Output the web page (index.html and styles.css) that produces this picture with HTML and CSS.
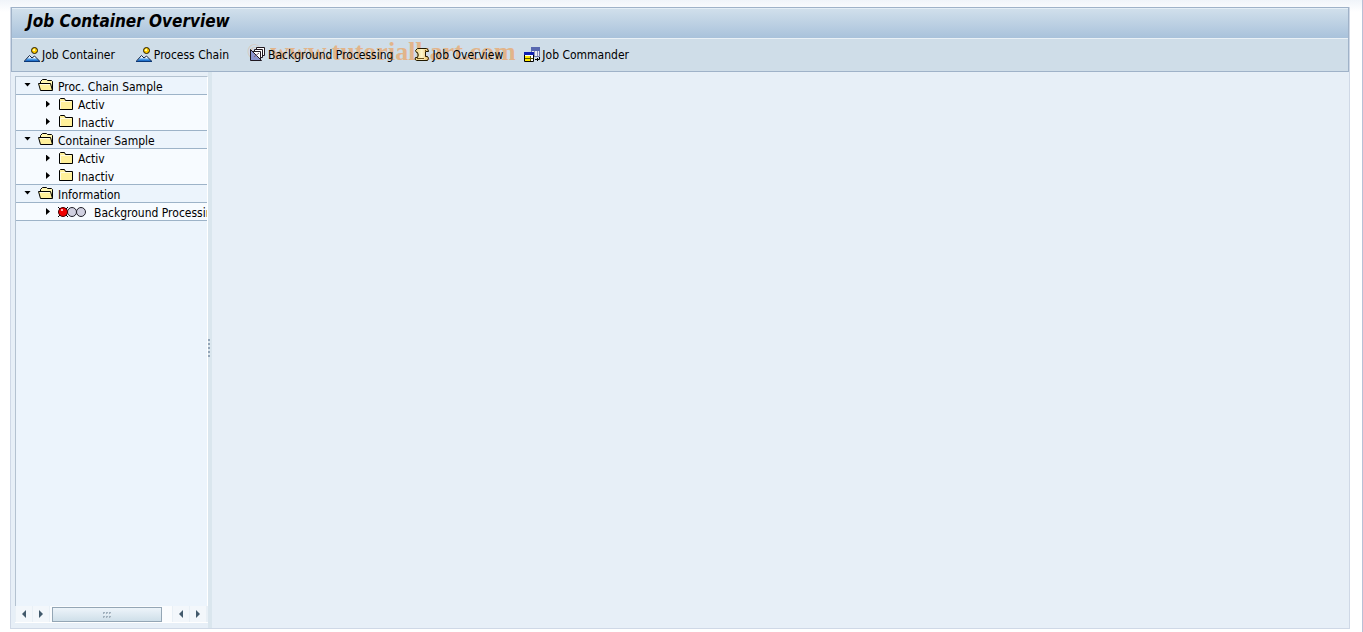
FILE: index.html
```html
<!DOCTYPE html>
<html lang="en">
<head>
<meta charset="utf-8">
<title>Job Container Overview</title>
<link rel="stylesheet" href="styles.css">
</head>
<body>
<svg class="defs" aria-hidden="true">
  <defs>
    <linearGradient id="peak" x1="0" y1="0" x2="0" y2="1"><stop offset="0.3" stop-color="#fff"/><stop offset="0.7" stop-color="#4a9ae8"/><stop offset="1" stop-color="#1060c0"/></linearGradient>
    <linearGradient id="scroll" x1="0" y1="0" x2="1" y2="0"><stop offset="0" stop-color="#e8c870"/><stop offset="0.5" stop-color="#fff8cc"/><stop offset="1" stop-color="#e8b860"/></linearGradient>
    <symbol id="open" viewBox="0 0 16 14">
      <path d="M2.500 5V3.500L4.500 1.500H8.500L9.500 2.500H13.500L14.500 3.500V12" fill="#fff6b0" stroke="#000"/>
      <path d="M.5 5.500H12.500L14.500 12.500H2.500Z" fill="#fff09a" stroke="#000"/>
      <path d="M2 6.500H12" stroke="#fffbe0"/>
    </symbol>
    <symbol id="closed" viewBox="0 0 16 14">
      <path d="M1.500 12.500V2.500L2.500 1.500H6.500L7.500 3.500H14.500V12.500Z" fill="#fff09a" stroke="#000"/>
      <path d="M2.500 12V4.500H13" stroke="#fffbe0" fill="none"/>
    </symbol>
    <symbol id="hill" viewBox="0 0 16 16">
      <path d="M6 14L10.500 9L15.500 14Z" fill="url(#peak)"/>
      <path d="M8 11L10.500 9L15.500 14" fill="none" stroke="#102040"/>
      <path d="M1 14L5.500 8.500L10.500 14Z" fill="url(#peak)"/>
      <path d="M.5 14L5.500 8.500L8 11" fill="none" stroke="#102040"/>
      <path d="M0 14.500H16" stroke="#0a3878"/>
      <circle cx="10.500" cy="3.500" r="3" fill="#ffcc00" stroke="#201800"/>
      <path d="M9 2h2v2H9z" fill="#fff6a0"/>
    </symbol>
  </defs>
</svg>
<div class="window">
  <header class="head">
    <h1 class="title">Job Container Overview</h1>
    <nav class="toolbar">
      <button class="tool"><svg class="icon"><use href="#hill"/></svg>Job Container</button>
      <button class="tool"><svg class="icon"><use href="#hill"/></svg>Process Chain</button>
      <button class="tool"><svg class="icon" viewBox="0 0 16 16">
        <path d="M6.500 .5H14.500V8.500H6.500Z" fill="#fff" stroke="#201820"/>
        <path d="M4.500 2.500H12.500V10.500H4.500Z" fill="#fff" stroke="#201820"/>
        <path d="M2.500 4.500H10.500V13.500H2.500Z" fill="#fff" stroke="#201820"/>
        <path d="M.5 2.500L11.500 13.500H.5Z" fill="#8c94cc" stroke="#201820"/>
        <path d="M4 10L9 6" stroke="#806070" fill="none"/>
      </svg>Background Processing</button>
      <button class="tool"><svg class="icon" viewBox="0 0 16 16">
        <path d="M3.500 1.500H12.500Q14.500 2 14.500 4.500H11.500V9.500H13.500Q15.500 11 13.500 13.500H2.500Q0 12.500 1.500 10.500H3.500Q5 8 3.500 5.500H2.500Q0 3.500 3.500 1.500Z" fill="url(#scroll)" stroke="#201800"/>
        <path d="M11.500 3V5M3 11.500H10" stroke="#705018" fill="none"/>
      </svg>Job Overview</button>
      <button class="tool"><svg class="icon" viewBox="0 0 16 16">
        <path d="M7.500 .5H15.500V9.500H7.500Z" fill="#e8e8f4" stroke="#7078a8"/>
        <path d="M7 0h9v4H7z" fill="#5868b0"/><path d="M10.500 4V9M13.500 4V9" stroke="#8890b8"/>
        <path d="M.5 5.500H9.500V14.500H.5Z" fill="#fff" stroke="#000"/>
        <path d="M0 5h10v3H0z" fill="#1020b0"/><path d="M1 9h6v5H1z" fill="#ffe800"/>
        <path d="M1 11.500H9M6.500 9V14" stroke="#605800"/>
        <path d="M15.500 10V12.500H11M13.500 11V14" stroke="#000" fill="none"/>
      </svg>Job Commander</button>
      <span class="mark"><span class="copy">©</span>www.tutorialkart.com</span>
    </nav>
  </header>
  <div class="body">
    <aside class="side">
      <div class="tree">
        <div class="row group"><i class="down"></i><svg class="folder"><use href="#open"/></svg>Proc. Chain Sample</div>
        <div class="row leaf"><i class="right"></i><svg class="folder"><use href="#closed"/></svg>Activ</div>
        <div class="row leaf last"><i class="right"></i><svg class="folder"><use href="#closed"/></svg>Inactiv</div>
        <div class="row group"><i class="down"></i><svg class="folder"><use href="#open"/></svg>Container Sample</div>
        <div class="row leaf"><i class="right"></i><svg class="folder"><use href="#closed"/></svg>Activ</div>
        <div class="row leaf last"><i class="right"></i><svg class="folder"><use href="#closed"/></svg>Inactiv</div>
        <div class="row group"><i class="down"></i><svg class="folder"><use href="#open"/></svg>Information</div>
        <div class="row leaf last"><i class="right"></i><svg class="lights" viewBox="0 0 30 12">
          <circle cx="14" cy="6" r="4.500" fill="#d0d0e0" stroke="#202028"/>
          <circle cx="23" cy="6" r="4.500" fill="#d0d0e0" stroke="#202028"/>
          <path d="M0 1L10 11M10 1L0 11" stroke="#000"/>
          <circle cx="5" cy="6" r="4.500" fill="#f00000" stroke="#400000"/>
          <path d="M3 3h2v2H3z" fill="#ffb0b0"/>
        </svg>Background Processing</div>
      </div>
      <div class="scrollbar">
        <button class="arrow" aria-label="Scroll left"><i class="tri back"></i></button>
        <button class="arrow" aria-label="Scroll right"><i class="tri"></i></button>
        <div class="track"><div class="thumb"><svg class="grip" viewBox="0 0 9 6"><path d="M0 1h2M3 1h2M6 1h2M0 5h2M3 5h2M6 5h2" stroke="#a0b0bd" stroke-width="2"/><path d="M1 2h1M4 2h1M7 2h1M1 6h1M4 6h1M7 6h1" stroke="#fff"/></svg></div></div>
        <button class="arrow" aria-label="Page left"><i class="tri back"></i></button>
        <button class="arrow" aria-label="Page right"><i class="tri"></i></button>
      </div>
    </aside>
    <div class="splitter"><i></i><i></i><i></i><i></i><i></i></div>
    <main class="content"></main>
  </div>
</div>
</body>
</html>
```
FILE: styles.css
```css
* { box-sizing: border-box; }
html, body { height: 100%; }
body {
  margin: 0;
  padding: 7px 12px 3px 10px;
  border-right: 1px solid #b8c0d6;
  background: linear-gradient(#f0f4f9, #fff 12px);
  font: 12px/16px "DejaVu Sans Condensed", "DejaVu Sans", sans-serif;
  color: #000;
}
.defs { position: absolute; width: 0; height: 0; }
.window {
  display: flex;
  flex-direction: column;
  height: 100%;
  border: 1px solid #cfd8e6;
  border-top: 0;
  background: #e7eff7;
}
.head { border: 1px solid #9fb2c8; }
.title {
  margin: 0;
  padding: 0 15px;
  height: 30px;
  border-top: 1px solid #e4eef6;
  background: linear-gradient(#d0dfeb, #a9c2db);
  font: italic bold 17px/24px "DejaVu Sans Condensed", "DejaVu Sans", sans-serif;
}
.toolbar {
  position: relative;
  isolation: isolate;
  display: flex;
  align-items: center;
  gap: 21px;
  height: 33px;
  padding: 0 12px;
  border-top: 1px solid #eaf1f6;
  background: #cfdde8;
}
.tool {
  display: flex;
  align-items: center;
  gap: 2px;
  padding: 0;
  border: 0;
  background: none;
  font: inherit;
  color: inherit;
  white-space: nowrap;
}
.icon { width: 16px; height: 16px; }
.mark {
  position: absolute;
  z-index: -1;
  left: 235px;
  top: 0;
  display: flex;
  gap: 8px;
  color: #f09a4c;
  opacity: 0.6;
  font: bold 26px/26px "Liberation Serif", serif;
  pointer-events: none;
}
.copy { font-weight: normal; font-size: 20px; opacity: 0.5; }
.body { flex: 1; display: flex; min-height: 0; }
.side {
  display: flex;
  flex-direction: column;
  width: 197px;
  padding: 4px 0 5px 4px;
}
.tree {
  flex: 1;
  overflow: hidden;
  border: 1px solid #b4c2d0;
  border-right-color: #fff;
  border-bottom: 0;
  background: #ecf4fc;
}
.row {
  display: flex;
  align-items: center;
  height: 18px;
  padding-top: 2px;
  white-space: nowrap;
  background: #f7fbff;
}
.group { background: #ecf4fc; }
.leaf { padding-left: 20px; }
.group, .last { border-bottom: 1px solid #9db3c8; }
.folder { flex: none; width: 16px; height: 14px; margin: 0 4px 3px 0; }
.lights { flex: none; width: 30px; height: 12px; margin: 0 6px 2px 0; }
.down { flex: none; width: 7px; height: 4px; margin: 0 7px 4px 8px; background: #000; clip-path: polygon(0 0, 100% 0, 50% 100%); }
.right { flex: none; width: 4px; height: 7px; margin: 0 8px 2px 10px; background: #000; clip-path: polygon(0 0, 100% 50%, 0 100%); }
.scrollbar { display: flex; gap: 1px; height: 17px; padding: 0 2px 0 1px; border-bottom: 1px solid #fff; background: #e9f0f6; }
.arrow { display: flex; align-items: center; justify-content: center; width: 16px; padding: 0; border: 0; background: #f3f7fb; }
.tri { width: 4px; height: 8px; background: #435a6c; clip-path: polygon(0 0, 100% 50%, 0 100%); }
.back { clip-path: polygon(100% 0, 100% 100%, 0 50%); }
.track { flex: 1; padding: 1px 10px 0 2px; background: #fafcfe; }
.thumb {
  display: flex;
  align-items: center;
  justify-content: center;
  height: 15px;
  border: 1px solid #94a6b5;
  background: linear-gradient(#edf4fa, #cfdfe9);
}
.grip { width: 9px; height: 6px; }
.splitter {
  display: flex;
  flex-direction: column;
  align-items: flex-start;
  justify-content: center;
  gap: 2px;
  width: 4px;
  padding-bottom: 4px;
  background: #dae6ee;
}
.splitter i { width: 2px; height: 2px; background: #93a5b8; }
.content { flex: 1; }
```
